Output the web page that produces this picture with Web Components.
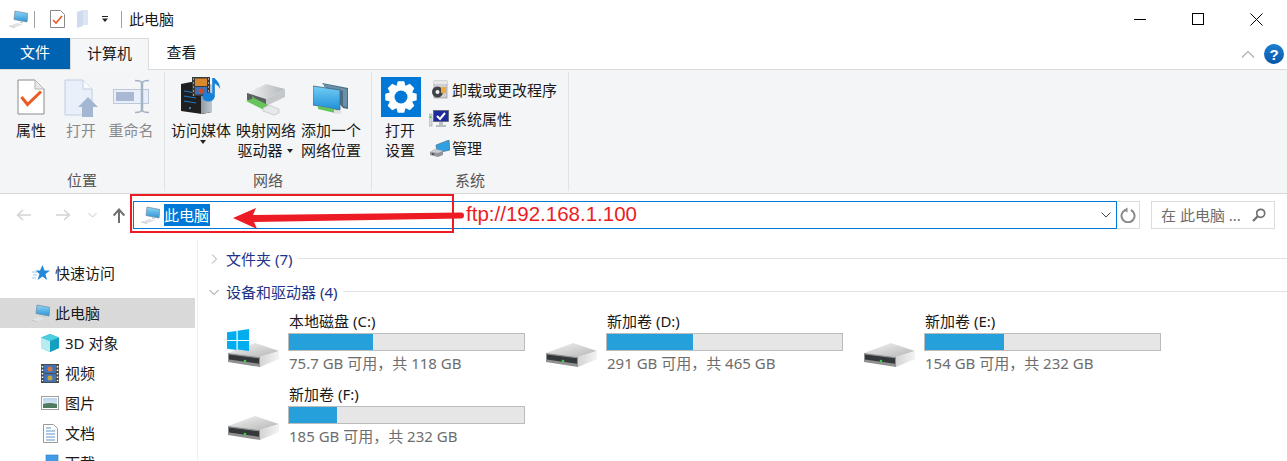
<!DOCTYPE html>
<html lang="zh"><head><meta charset="utf-8"><title>此电脑</title>
<style>
html,body{margin:0;padding:0;background:#fff}
body{width:1287px;height:461px;overflow:hidden;position:relative;display:flex;flex-direction:column;font:15px/20px "Noto Sans","Noto Sans CJK SC",sans-serif;color:#1a1a1a}
</style></head><body>
<x-titlebar></x-titlebar>
<x-tabs></x-tabs>
<x-ribbon>
  <x-group label="位置" width="165" pad="6" gap="0">
    <x-big w="50"><x-icon slot="icon" name="props" style="margin-bottom:2px"></x-icon>属性</x-big>
    <x-big w="50" off><x-icon slot="icon" name="open"></x-icon>打开</x-big>
    <x-big w="50" off><x-icon slot="icon" name="rename" style="margin-bottom:2px"></x-icon>重命名</x-big>
  </x-group>
  <x-group label="网络" width="207" pad="6" gap="5">
    <x-big w="60"><x-icon slot="icon" name="media" style="margin-bottom:2px"></x-icon>访问媒体<x-caret style="display:block;margin:0 auto;position:relative;left:2px"></x-caret></x-big>
    <x-big w="60"><x-icon slot="icon" name="netdrive" style="margin-bottom:1px"></x-icon>映射网络<br>驱动器 <x-caret></x-caret></x-big>
    <x-big w="60"><x-icon slot="icon" name="netloc" style="margin-bottom:2px"></x-icon>添加一个<br>网络位置</x-big>
  </x-group>
  <x-group label="系统" width="197" pad="9" gap="9">
    <x-big w="40"><x-icon slot="icon" name="settings"></x-icon><div style="margin-right:2px">打开<br>设置</div></x-big>
    <x-smalls>
      <x-small><x-icon slot="icon" name="uninstall" style="margin-left:1px"></x-icon>卸载或更改程序</x-small>
      <x-small><x-icon slot="icon" name="sysprops" style="margin-left:-1px"></x-icon>系统属性</x-small>
      <x-small><x-icon slot="icon" name="manage"></x-icon>管理</x-small>
    </x-smalls>
  </x-group>
</x-ribbon>
<x-addressbar></x-addressbar>
<x-main>
  <x-nav>
    <x-navitem indent="30" top="18"><x-icon slot="icon" name="star" style="margin-left:2px"></x-icon>快速访问</x-navitem>
    <x-navitem indent="30" top="10" selected><x-icon slot="icon" name="pc"></x-icon>此电脑</x-navitem>
    <x-navitem indent="40"><x-icon slot="icon" name="cube" style="margin-left:1px"></x-icon>3D 对象</x-navitem>
    <x-navitem indent="40"><x-icon slot="icon" name="film" style="margin-left:1px"></x-icon>视频</x-navitem>
    <x-navitem indent="40"><x-icon slot="icon" name="picture" style="margin-left:1px"></x-icon>图片</x-navitem>
    <x-navitem indent="40"><x-icon slot="icon" name="doc" style="margin-left:3px"></x-icon>文档</x-navitem>
    <x-navitem indent="40"><x-icon slot="icon" name="download" style="margin-left:5px"></x-icon>下载</x-navitem>
  </x-nav>
  <x-content>
    <x-section collapsed label="文件夹 (7)"></x-section>
    <x-section label="设备和驱动器 (4)">
      <x-drive win name="本地磁盘 (C:)" used="84" info="75.7 GB 可用，共 118 GB"></x-drive>
      <x-drive name="新加卷 (D:)" used="86" info="291 GB 可用，共 465 GB"></x-drive>
      <x-drive name="新加卷 (E:)" used="79" info="154 GB 可用，共 232 GB"></x-drive>
      <x-drive name="新加卷 (F:)" used="48" info="185 GB 可用，共 232 GB"></x-drive>
    </x-section>
  </x-content>
</x-main>
<x-annotation></x-annotation>
<script>
const grad=(id,a,b,x2=0,y2=1)=>`<linearGradient id="${id}" x1="0" y1="0" x2="${x2}" y2="${y2}"><stop offset="0" stop-color="${a}"/><stop offset="1" stop-color="${b}"/></linearGradient>`;
const PC=`<defs>${grad('pm','#8ed6f6','#2f93d6')}</defs><path d="M7 1l13 2.500-1 8.500-13-2.500z" fill="url(#pm)" stroke="#6a8ba0" stroke-width=".7"/><path d="M12 11l3 .6v1.600l-3-.5z" fill="#c4ccd2"/><path d="M1 16l8-3 6 1.200-8 3.400z" fill="#dfe3e6"/><path d="M1 16l6 1.600" stroke="#b4bbc1" stroke-width=".7"/>`;
const gear=(()=>{let d='';const cx=20,cy=20;for(let i=0;i<8;i++){const a=i*Math.PI/4;const p=(r,o)=>[(cx+r*Math.cos(a+o)).toFixed(1),(cy+r*Math.sin(a+o)).toFixed(1)].join(' ');d+=(i?'L':'M')+p(12.2,-.38)+'L'+p(16,-.2)+'L'+p(16,.2)+'L'+p(12.2,.38)}return d+'Z'})();
const ICONS={
 pc:[20,18,PC],
 props:[28,36,`<path d="M1 1h17l9 9v25H1z" fill="#fff" stroke="#8a8a8a"/><path d="M18 1v9h9" fill="#e8e8e8" stroke="#b5b5b5"/><path d="M4.500 18l6 7.500L24 12.500" fill="none" stroke="#ea5a24" stroke-width="3"/>`],
 props16:[15,18,`<path d="M.5.5h10l4 4v13H.5z" fill="#fff" stroke="#8a8a8a"/><path d="M3 10l3 3 6-7" fill="none" stroke="#ea5a24" stroke-width="1.600"/>`],
 folderq:[13,18,`<path d="M1 2l6-2v16l-6 2z" fill="#cfdbee"/><path d="M7 0h5v15H7z" fill="#dbe5f3"/>`],
 open:[34,38,`<path d="M1 1h18l9 9v26H1z" fill="#eaf0fa" stroke="#c0cfe4"/><path d="M19 1v9h9" fill="#f8fafd" stroke="#c0cfe4"/><path d="M24 18l10 10h-5v10H18V28h-4z" fill="#a3b6d2"/>`],
 rename:[36,36,`<rect x=".5" y="10.500" width="35" height="14" fill="#e9effa" stroke="#bcc9dc"/><rect x="3" y="13" width="18" height="9" fill="#a9b9d3"/><path d="M29 3v29" stroke="#a3b1c6" stroke-width="2.500" fill="none"/><path d="M22 1.500q7 0 7 3q0-3 7-3M22 33.500q7 0 7-3q0 3 7 3" stroke="#a3b1c6" stroke-width="1.500" fill="none"/>`],
 media:[40,38,`<defs>${grad('mt','#8f9aa6','#c4c9cf',1,0)}</defs><path d="M0 7l10-2 21 3v27l-10 2-21-3z" fill="#1f1f1f"/><path d="M20 9l11-1v27l-11 2z" fill="url(#mt)"/><path d="M3 14l12 2M3 19l12 2M3 24l12 2" stroke="#1d79c8" stroke-width="1.200"/><circle cx="9" cy="31" r="1" fill="#5aa4e0"/><rect x="11" y="0" width="18" height="19" fill="#3a3a3a"/><rect x="14" y="1.500" width="12" height="7.500" fill="#d9882c"/><rect x="14" y="10" width="12" height="7.500" fill="#3e72b8"/><circle cx="20" cy="14" r="2.500" fill="#cf4a2a"/><path d="M12 2h1M12 6h1M12 10h1M12 14h1M12 18h1M27 2h1M27 6h1M27 10h1M27 14h1M27 18h1" stroke="#fff"/><path d="M32.500 1v19" stroke="#1780d8" stroke-width="2.600"/><path d="M33 1q6 4 6 11q-2-4-6-6z" fill="#1780d8"/><ellipse cx="27.500" cy="20" rx="6" ry="4.500" fill="#1780d8"/>`],
 netdrive:[42,32,`<defs>${grad('nd','#f2f3f4','#b3b7ba',1,0)}</defs><path d="M2 9L21 0l19 5-19 10z" fill="url(#nd)"/><path d="M2 9l19 6v7L2 16z" fill="#5b6062"/><path d="M21 15L40 5v8L21 22z" fill="#c4c8ca"/><circle cx="8" cy="13.500" r=".9" fill="#5ed05e"/><path d="M1 17l8-3 14 7-4 5z" fill="#67c35a"/><path d="M18 24l6-3 10 4v4l-5 2-11-4z" fill="#e6e8e9" stroke="#a8adb0" stroke-width=".5"/>`],
 netloc:[36,32,`<defs>${grad('nl','#74cdf5','#1e8fd8')}</defs><path d="M9 0l26 5v21l-5-1z" fill="#4a6d88"/><path d="M11 1l23 5v18l-4-1V8L11 4z" fill="#6b90a8"/><path d="M0 3l27 4v20L0 22z" fill="url(#nl)" stroke="#3d6780" stroke-width=".8"/><path d="M5 23l15 3 6 2-4 2-17-4z" fill="#62c35a"/><path d="M21 27l7 1v3l-7-.5z" fill="#dfe3e6"/>`],
 settings:[40,40,`<rect width="40" height="40" fill="#0078d7"/><path d="${gear}" fill="#fff"/><circle cx="20" cy="20" r="6.500" fill="#0078d7"/>`],
 uninstall:[17,20,`<rect x="3" y="1" width="13" height="17" fill="#d0d0d0" stroke="#8a8a8a" stroke-width=".6"/><rect x="3" y="1" width="13" height="3" fill="#e8e8e8"/><circle cx="6.500" cy="12" r="5.500" fill="#3e4347"/><circle cx="6.500" cy="12" r="2" fill="#eef0f2"/><path d="M10 7h5v6h-5z" fill="#f0a93c"/>`],
 sysprops:[20,18,`<rect x="4.500" y=".5" width="15" height="11" fill="#1d2b9c" stroke="#5c6570" stroke-width=".8"/><path d="M8 6l3 3 5-6" fill="none" stroke="#fff" stroke-width="2"/><path d="M10 12h4v3h3v2H7v-2h3z" fill="#b9bec3"/><rect x="0" y="4" width="3" height="12" fill="#d8dbdd" stroke="#8a9096" stroke-width=".5"/><rect x=".7" y="6" width="1.600" height="2" fill="#56c04a"/>`],
 manage:[20,17,`<path d="M6 5l13-5 1 10-13 3z" fill="#31a0e2" stroke="#46657c" stroke-width=".6"/><path d="M0 12l5-3 8 2v4l-5 2-8-2z" fill="#8f959a"/><path d="M0 12l5-3 8 2-5 2z" fill="#c8ccd0"/><circle cx="3" cy="14" r="1" fill="#444"/>`],
 star:[18,16,`<path d="M10.500 0l2 5.500h5.500l-4.500 3.500 1.500 6-4.500-3.500-5 3.500 2-6L3.500 5.500H8z" fill="#2289d8"/><path d="M0 7h5M1 10h4M0 13h4" stroke="#9ccbee"/>`],
 cube:[18,18,`<path d="M9 0l9 3.500v10.500l-9 4-9-4V3.500z" fill="#2bb7cf"/><path d="M0 3.500l9 3.500v11l-9-4z" fill="#b9ecf0"/><path d="M9 7l9-3.500V14l-9 4z" fill="#149fc0"/><path d="M0 3.500L9 0l9 3.500L9 7z" fill="#4ecde0"/>`],
 film:[18,19,`<rect width="18" height="19" fill="#4c4c4c"/><rect x="3" y="1" width="12" height="8" fill="#3f72b8"/><rect x="3" y="10" width="12" height="8" fill="#3f72b8"/><circle cx="9" cy="5" r="2.500" fill="#d2763a"/><circle cx="9" cy="14" r="2.500" fill="#c6a23c"/><path d="M1.500 2v15M16.500 2v15" stroke="#fff" stroke-width="1.500" stroke-dasharray="1.500 2"/>`],
 picture:[18,15,`<defs>${grad('pp','#b8d4ec','#e8f1f8')}</defs><rect x=".5" y=".5" width="17" height="13" fill="#fff" stroke="#a0a0a0"/><rect x="2" y="2" width="14" height="10" fill="url(#pp)"/><path d="M2 8q6-2 14 0v4H2z" fill="#4f7a5f"/>`],
 doc:[15,19,`<path d="M.5.5h10l4 4v14H.5z" fill="#fff" stroke="#9a9a9a"/><path d="M3 4h5M3 7h9M3 10h9M3 13h9M3 16h9" stroke="#5f97c8"/>`],
 download:[14,18,`<rect x="1" y="1" width="12" height="12" fill="#3f9be6" stroke="#2a7dc2" stroke-width=".6"/>`],
 win:[22,22,`<path d="M0 3.200l9.500-1.300v9H0zM10.700 1.700L22 0v10.900H10.700zM0 12h9.500v9L0 19.700zM10.700 12H22v10l-11.300-1.600z" fill="#00adef"/>`],
 hdd:[53,27,`<defs>${grad('ht','#f4f4f4','#b5b5b5',1,1)}${grad('hr','#d4d4d4','#f3f3f3',1,0)}</defs><path d="M1 11L28 1l24 8-19 6z" fill="url(#ht)"/><path d="M33 15l19-6v8L33 25z" fill="url(#hr)"/><path d="M1 11l32 4v10L1 20z" fill="#909090"/><path d="M2 12.500l30 3.800v5.500L2 17.500z" fill="#34383a"/><circle cx="18" cy="19" r="1.300" fill="#35d04a"/>`]
};
function def(name,html,init){customElements.define(name,class extends HTMLElement{constructor(){super();this.attachShadow({mode:'open'}).innerHTML=html}connectedCallback(){init&&init.call(this,this.shadowRoot)}})}

def('x-icon','<style>:host{display:block;line-height:0}svg{display:block}</style><span></span>',function(r){const [w,h,s]=ICONS[this.getAttribute('name')];r.querySelector('span').innerHTML=`<svg xmlns="http://www.w3.org/2000/svg" width="${w}" height="${h}" viewBox="0 0 ${w} ${h}">${s}</svg>`});
def('x-caret','<style>:host{display:inline-block;width:0;height:0;border:3.5px solid transparent;border-top:4px solid #222;border-bottom:0;vertical-align:middle;margin:0 1px 2px}</style>');

def('x-titlebar',`<style>
:host{display:flex;align-items:center;height:38px;flex:none}
.sep{width:1px;height:17px;background:#a0a0a0}
.t{margin-left:7px;font-size:15px}
.ctl{margin-left:auto;display:flex;align-items:center}
.ctl svg{display:block}
</style>
<x-icon name="pc" style="margin-left:8px"></x-icon>
<span class="sep" style="margin-left:6px"></span>
<x-icon name="props16" style="margin-left:15px"></x-icon>
<x-icon name="folderq" style="margin-left:11px"></x-icon>
<svg width="8" height="6" style="margin-left:12px" viewBox="0 0 8 6"><path d="M1 .5h6" stroke="#222"/><path d="M1 2.500h6L4 6z" fill="#222"/></svg>
<span class="sep" style="margin-left:12px"></span>
<span class="t">此电脑</span>
<div class="ctl">
<svg width="12" height="12" viewBox="0 0 12 12"><path d="M0 6.500h12" stroke="#000"/></svg>
<svg width="12" height="12" viewBox="0 0 12 12" style="margin-left:46px"><rect x=".5" y=".5" width="11" height="11" fill="none" stroke="#000"/></svg>
<svg width="13" height="13" viewBox="0 0 13 13" style="margin:0 24px 0 46px"><path d="M.5.5l12 12M12.500.5l-12 12" stroke="#000"/></svg>
</div>`);

def('x-tabs',`<style>
:host{display:flex;height:32px;flex:none;box-sizing:border-box;border-bottom:1px solid #dadbdc;font-size:15px}
div{box-sizing:border-box;height:31px;line-height:29px;text-align:center}
.f{width:70px;background:#0063b1;color:#fff}
.a{width:79px;height:32px;background:#f5f6f7;border:1px solid #dadbdc;border-bottom:0}
.c{width:65px}
.r{margin-left:auto;display:flex;align-items:center;height:31px;padding-right:3px}
</style>
<div class="f">文件</div><div class="a">计算机</div><div class="c">查看</div>
<div class="r">
<svg width="14" height="8" viewBox="0 0 14 8" style="margin-right:9px"><path d="M1 7.500l6-6 6 6" fill="none" stroke="#b0b0b0" stroke-width="1.200"/></svg>
<svg width="20" height="20" viewBox="0 0 20 20"><defs><linearGradient id="h" x1="0" y1="0" x2="0" y2="1"><stop offset="0" stop-color="#1c7fd0"/><stop offset="1" stop-color="#0a55a8"/></linearGradient></defs><circle cx="10" cy="10" r="10" fill="url(#h)"/><text x="10" y="15.500" text-anchor="middle" font-family="Liberation Sans" font-weight="700" font-size="15" fill="#fff">?</text></svg>
</div>`);

def('x-ribbon',`<style>:host{display:flex;height:124px;flex:none;box-sizing:border-box;background:#f4f5f7;border-bottom:1px solid #d9d9d9}</style><slot></slot>`);

def('x-group',`<style>
:host{display:flex;flex-direction:column;box-sizing:border-box;margin-top:2px;height:119px;border-right:1px solid #e2e3e4;flex:none}
.b{display:flex;flex:1;min-height:0}
.l{text-align:center;height:20px;line-height:20px;color:#555;font-size:15px;margin-bottom:1px}
</style><div class="b"><slot></slot></div><div class="l"></div>`,function(r){
 this.style.width=this.getAttribute('width')+'px';
 const b=r.querySelector('.b');b.style.paddingLeft=this.getAttribute('pad')+'px';b.style.gap=this.getAttribute('gap')+'px';
 r.querySelector('.l').textContent=this.getAttribute('label');
});

def('x-big',`<style>
:host{display:block;flex:none;text-align:center;line-height:20px;font-size:15px}
:host([off]){color:#8a8a8a}
.i{height:40px;margin:5px 0 3px;display:flex;justify-content:center;align-items:flex-end}
</style><div class="i"><slot name="icon"></slot></div><slot></slot>`,function(){this.style.width=this.getAttribute('w')+'px'});

def('x-smalls',`<style>:host{display:flex;flex-direction:column;gap:9px;padding-top:8px}</style><slot></slot>`);
def('x-small',`<style>:host{display:flex;align-items:center;height:20px;font-size:15px}
.i{width:22px;display:flex;justify-content:flex-start;flex:none}</style><div class="i"><slot name="icon"></slot></div><slot></slot>`);

def('x-addressbar',`<style>
:host{display:flex;align-items:flex-start;height:46px;flex:none;box-sizing:border-box;padding-top:7px;font-size:15px}
.nav{display:flex;align-items:center;height:28px;width:133px;flex:none}
.addr{box-sizing:border-box;width:984px;height:28px;border:1px solid #0078d7;display:flex;align-items:center;padding-left:6px;flex:none}
.sel{background:#0078d7;color:#fff;height:22px;line-height:22px;width:46px;margin-left:4px;flex:none;white-space:nowrap}
.dd{margin-left:auto;margin-right:5px}
.ref{box-sizing:border-box;width:23px;height:28px;border:1px solid #dcdcdc;border-left:0;display:flex;align-items:center;justify-content:center;flex:none}
.search{box-sizing:border-box;width:124px;height:28px;margin-left:11px;border:1px solid #dcdcdc;display:flex;align-items:center;color:#6d6d6d;padding:0 8px 0 9px;font-size:15px;flex:none;white-space:nowrap}
.search svg{margin-left:auto}
svg{display:block}
</style>
<div class="nav">
<svg width="16" height="12" viewBox="0 0 16 12" style="margin-left:16px"><path d="M15 6H2M7 1L1.500 6 7 11" fill="none" stroke="#d4d4d4" stroke-width="1.500"/></svg>
<svg width="16" height="12" viewBox="0 0 16 12" style="margin-left:23px"><path d="M1 6h13M9 1l5.500 5L9 11" fill="none" stroke="#d4d4d4" stroke-width="1.500"/></svg>
<svg width="9" height="6" viewBox="0 0 9 6" style="margin-left:17px"><path d="M.5 1l4 4 4-4" fill="none" stroke="#c4c4c4"/></svg>
<svg width="12" height="15" viewBox="0 0 12 15" style="margin-left:16px"><path d="M6 15V2M.7 7.500L6 1.500l5.300 6" fill="none" stroke="#6f6f6f" stroke-width="2"/></svg>
</div>
<div class="addr"><x-icon name="pc"></x-icon><span class="sel">此电脑</span>
<svg class="dd" width="10" height="6" viewBox="0 0 10 6"><path d="M.5 .5l4.500 4.500 4.500-4.500" fill="none" stroke="#444"/></svg></div>
<div class="ref"><svg width="16" height="16" viewBox="0 0 16 16"><path d="M5.500 2.800A6.500 6.500 0 1 0 11 3" fill="none" stroke="#8a8a8a" stroke-width="2"/><path d="M7.500 .5v5l-4-2.300z" fill="#8a8a8a"/></svg></div>
<div class="search"><span>在 此电脑 ...</span><svg width="14" height="14" viewBox="0 0 14 14"><circle cx="8.700" cy="5.300" r="4" fill="none" stroke="#6f6f6f" stroke-width="1.700"/><path d="M5.800 8.200L1 13" stroke="#6f6f6f" stroke-width="2.200"/></svg></div>`);

def('x-main',`<style>:host{display:flex;flex:1;min-height:0;overflow:hidden}</style><slot></slot>`);
def('x-nav',`<style>:host{display:block;box-sizing:border-box;width:198px;flex:none;border-right:1px solid #f0f0f0;font-size:15px;padding-right:2px}</style><slot></slot>`);
def('x-navitem',`<style>
:host{display:flex;align-items:center;height:30px;white-space:nowrap}
:host([selected]){background:#d9d9d9}
.i{width:25px;display:flex;justify-content:flex-start;flex:none}
</style><div class="i"><slot name="icon"></slot></div><slot></slot>`,function(){this.style.paddingLeft=this.getAttribute('indent')+'px';this.style.marginTop=(this.getAttribute('top')||0)+'px'});

def('x-content',`<style>:host{display:block;flex:1;padding:2px 0 0 11px;min-width:0}</style><slot></slot>`);
def('x-section',`<style>
:host{display:block}
.h{display:flex;align-items:center;height:33px;color:#1e3287;font-size:15px;white-space:nowrap}
.h svg{flex:none;width:10px;margin-right:7px}
.h i{flex:1;height:1px;background:#e2e2e2;margin-left:6px}
.g{display:grid;grid-template-columns:repeat(3,318px);grid-auto-rows:73px;padding-left:18px}
</style><div class="h"><svg height="10" viewBox="0 0 10 10"></svg><span></span><i></i></div><div class="g"><slot></slot></div>`,function(r){
 r.querySelector('span').textContent=this.getAttribute('label');
 r.querySelector('svg').innerHTML=this.hasAttribute('collapsed')?'<path d="M3 .5L7.500 5 3 9.500" fill="none" stroke="#a6a6a6"/>':'<path d="M.5 3L5 7.500 9.500 3" fill="none" stroke="#8a8a8a"/>';
});
def('x-drive',`<style>
:host{display:flex;font-size:15px}
.ic{width:61px;height:73px;flex:none;display:flex;flex-direction:column;position:relative}
.ic x-icon.h{margin-top:34px}
.ic x-icon.w{position:absolute;left:0;top:21px}
.m{width:237px;padding-top:3px}
.n{height:20px;line-height:20px;padding-left:1px}
.bar{box-sizing:border-box;height:18px;background:#e6e6e6;border:1px solid #bcbcbc;margin-top:2px}
.bar b{display:block;height:16px;background:#26a0da;box-sizing:border-box}
.s{color:#6d6d6d;height:20px;line-height:20px;margin-top:2px;padding-left:1px;white-space:nowrap}
</style><div class="ic"><x-icon class="h" name="hdd"></x-icon></div><div class="m"><div class="n"></div><div class="bar"><b></b></div><div class="s"></div></div>`,function(r){
 r.querySelector('.n').textContent=this.getAttribute('name');
 r.querySelector('.s').textContent=this.getAttribute('info');
 r.querySelector('b').style.width=this.getAttribute('used')+'px';
 if(this.hasAttribute('win')){const w=document.createElement('x-icon');w.className='w';w.setAttribute('name','win');r.querySelector('.ic').appendChild(w)}
});
def('x-annotation',`<style>
:host{position:absolute;left:0;top:0;width:1287px;height:461px;pointer-events:none;display:block}
.box{position:absolute;left:130px;top:194px;width:324px;height:39px;box-sizing:border-box;border:2px solid #ed1c24}
.t{position:absolute;left:466px;top:202px;font:20.5px/24px "Liberation Sans",sans-serif;color:#ed1c24;white-space:nowrap}
svg{position:absolute;left:230px;top:204px}
</style><div class="box"></div>
<svg width="236" height="28" viewBox="0 0 236 28"><path d="M3 14L26 4l-3 7 208-2.500a3 3 0 0 1 0 6L24 18l3 7z" fill="#ed1c24"/></svg>
<div class="t">ftp://192.168.1.100</div>`);
</script>
</body></html>
